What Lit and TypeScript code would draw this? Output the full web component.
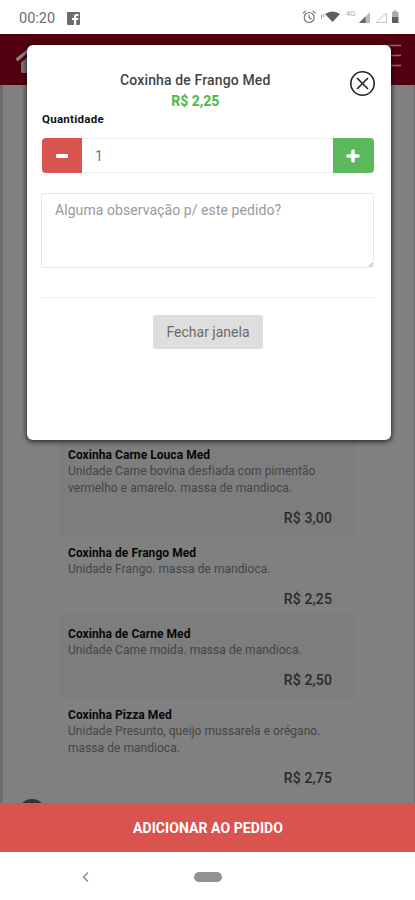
import { LitElement, html, css } from "lit";
import { customElement } from "lit/decorators.js";

interface Item {
  name: string;
  lines: string[];
  price: string;
  shaded: boolean;
}

const items: Item[] = [
  { name: "Coxinha Carne Louca Med", lines: ["Unidade Carne bovina desfiada com pimentão", "vermelho e amarelo. massa de mandioca."], price: "R$ 3,00", shaded: true },
  { name: "Coxinha de Frango Med", lines: ["Unidade Frango. massa de mandioca."], price: "R$ 2,25", shaded: false },
  { name: "Coxinha de Carne Med", lines: ["Unidade Carne moída. massa de mandioca."], price: "R$ 2,50", shaded: true },
  { name: "Coxinha Pizza Med", lines: ["Unidade Presunto, queijo mussarela e orégano.", "massa de mandioca."], price: "R$ 2,75", shaded: false },
];

@customElement("app-root")
export class AppRoot extends LitElement {
  static styles = css`
    :host { display: flex; flex-direction: column; position: relative; width: 415px; height: 900px; overflow: hidden; background: #fff; font-family: Roboto, "Liberation Sans", sans-serif; }
    * { box-sizing: border-box; }
    svg { display: block; flex: none; }
    .status { height: 34px; flex: none; display: flex; align-items: center; padding: 2px 14px 0 19px; color: #6c6c6c; font-size: 14.5px; }
    .clock { width: 48px; }
    .signals { margin: 0 0 2px auto; }
    .header { height: 51px; flex: none; background: #520010; display: flex; justify-content: space-between; padding: 10px 13px 0 15px; }
    .page { height: 718px; flex: none; background: #808080; border-left: 3px solid #6d6d6d; border-right: 1px solid #6d6d6d; padding: 352px 55px 0 55px; overflow: hidden; position: relative; }
    .item { display: flex; flex-direction: column; padding: 10px 20px 0 10px; width: 297px; height: 81px; border-bottom: 1px solid #7a7a7a; white-space: nowrap; }
    .item.tall { height: 98px; }
    .item.shaded { background: #7d7d7d; }
    .name { color: #080808; font-weight: 700; font-size: 12px; line-height: 16px; letter-spacing: 0.05px; }
    .line { color: #444; font-size: 12px; line-height: 17px; letter-spacing: 0.04px; }
    .price { margin: 12px 3px 0 0; text-align: right; color: #2a2a2a; font-weight: 500; font-size: 14px; line-height: 18px; letter-spacing: 0.15px; }
    .fab { position: absolute; left: 15px; top: 714px; width: 28px; height: 28px; border-radius: 50%; background: #333; }
    .add { height: 49px; flex: none; border: 0; background: #d9534f; color: #fff; font: 700 14px Roboto, sans-serif; letter-spacing: 0.07px; display: flex; align-items: center; justify-content: center; padding: 1px 0 0 1px; }
    .nav { height: 48px; display: flex; align-items: center; padding: 2px 0 0 82px; }
    .pill { width: 28px; height: 10px; border-radius: 5px; background: #929292; margin-left: 104px; }
    .modal { position: absolute; left: 27px; top: 45px; width: 363.5px; height: 395px; background: #fff; border-radius: 6px; box-shadow: 0 1px 5px 1px rgba(0,0,0,.65); padding: 25px 16px 0 15px; }
    .title { text-align: center; color: #444; font-weight: 500; font-size: 14px; letter-spacing: 0.13px; line-height: 20px; padding-right: 26px; }
    .cost { text-align: center; color: #4cb944; font-weight: 700; font-size: 14px; line-height: 20px; padding-right: 26px; margin-top: 1px; }
    .close { position: absolute; left: 322px; top: 25px; }
    .label { color: #111; font-weight: 700; font-size: 11.5px; letter-spacing: 0.28px; line-height: 16px; }
    .group { display: flex; height: 35px; margin: 11px 1px 0 0; border: 1px solid #eee; border-radius: 4px; }
    .btn { width: 40px; height: 35px; margin: -1px; display: flex; align-items: center; justify-content: center; background: #d9534f; border-radius: 4px 0 0 4px; }
    .btn.plus { background: #5cb85c; border-radius: 0 4px 4px 0; width: 41px; }
    .value { flex: 1; padding-left: 14px; line-height: 34px; color: #777; font-size: 14px; }
    .note { position: relative; height: 75px; margin: 20px 1px 0 -1px; border: 1px solid #e7e7e7; border-radius: 3px; padding: 8px 13px; color: #999; font-size: 14px; letter-spacing: 0.07px; line-height: 17px; white-space: nowrap; }
    .grip { position: absolute; right: 0; bottom: 0; }
    .rule { height: 1px; background: #efefef; margin-top: 29px; }
    .dismiss { display: flex; align-items: center; justify-content: center; width: 110px; height: 34px; margin: 17px 0 0 111px; border-radius: 3px; background: #dedede; color: #6b6b6b; font-size: 14px; }
  `;

  render() {
    return html`
      <div class="status">
        <span class="clock">00:20</span>
        <svg width="13" height="13" viewBox="0 0 13 13"><rect width="13" height="13" rx="1" fill="#6c6c6c" /><path d="M7 13V8H5V6h2V4.500C7 3 8 2 9.500 2H11.500V4h-1.400q-.9 0-.9.8V6h2.200l-.3 2H9.200v5z" fill="#fff" /></svg>
        <svg class="signals" width="100" height="16" viewBox="0 0 100 16">
          <g fill="none" stroke="#777" stroke-width="1.2"><circle cx="8.200" cy="8.500" r="5" /><path d="M8.200 5.500v3.300l2.300 1.300M2 4.300l2.800-2.400M14.400 4.300l-2.800-2.400" /></g>
          <path d="M20.500 6v4M22.500 5v3" stroke="#aaa" stroke-width="1.200" />
          <path d="M24 5Q31.500 0 39 5L31.500 13z" fill="#606060" />
          <text x="44.500" y="7" font-size="8" fill="#aaa">4G</text>
          <path d="M58 14L69 3v11z" fill="#bbb" /><path d="M58 14l6.500-6.500V14z" fill="#666" />
          <path d="M75 13.500L85.500 4v9.500z" fill="none" stroke="#c5c5c5" />
          <path d="M91 3h1.500V1.500h3V3H97.500v5h-6.500z" fill="#aaa" /><path d="M91 8h6.500v6h-6.500z" fill="#606060" />
        </svg>
      </div>
      <div class="header">
        <svg width="28" height="30" viewBox="0 0 28 30"><path d="M6 18.500L14 12l9 6v11H8q-2 0-2-2z" fill="#777" /><path d="M1.500 16L14 6l12.500 10" fill="none" stroke="#8c8484" stroke-width="3.200" /></svg>
        <svg width="20" height="24" viewBox="0 0 20 24"><path d="M0 1.500h19M0 11.500h19M0 21.500h19" stroke="#8a7074" stroke-width="1.700" /></svg>
      </div>
      <div class="page">
        ${items.map(
          (i) => html`<div class="item ${i.shaded ? "shaded" : ""} ${i.lines.length > 1 ? "tall" : ""}">
            <div class="name">${i.name}</div>
            ${i.lines.map((l) => html`<div class="line">${l}</div>`)}
            <div class="price">${i.price}</div>
          </div>`,
        )}
        <div class="fab"></div>
      </div>
      <button class="add">ADICIONAR AO PEDIDO</button>
      <div class="nav">
        <svg width="8" height="12" viewBox="0 0 8 12"><path d="M6 1.500L1.500 6 6 10.500" fill="none" stroke="#8a8a8a" stroke-width="1.400" /></svg>
        <div class="pill"></div>
      </div>
      <div class="modal">
        <div class="title">Coxinha de Frango Med</div>
        <div class="cost">R$ 2,25</div>
        <svg class="close" width="28" height="28" viewBox="0 0 28 28"><g fill="none" stroke="#222" stroke-width="1.600"><circle cx="13.500" cy="13.500" r="11.700" /><path d="M8 8l11 11M19 8L8 19" /></g></svg>
        <div class="label">Quantidade</div>
        <div class="group">
          <div class="btn"><svg width="12" height="12" viewBox="0 0 12 12"><rect y="4" width="12" height="4" rx="1" fill="#fff" /></svg></div>
          <div class="value">1</div>
          <div class="btn plus"><svg width="14" height="14" viewBox="0 0 14 14"><path d="M7 2v10M2 7h10" stroke="#fff" stroke-width="3.600" stroke-linecap="round" /></svg></div>
        </div>
        <div class="note">Alguma observação p/ este pedido?
          <svg class="grip" width="5" height="5" viewBox="0 0 5 5"><path d="M1 4.500L4.500 1M3.500 4.500l1-1" stroke="#888" /></svg>
        </div>
        <div class="rule"></div>
        <div class="dismiss">Fechar janela</div>
      </div>
    `;
  }
}
